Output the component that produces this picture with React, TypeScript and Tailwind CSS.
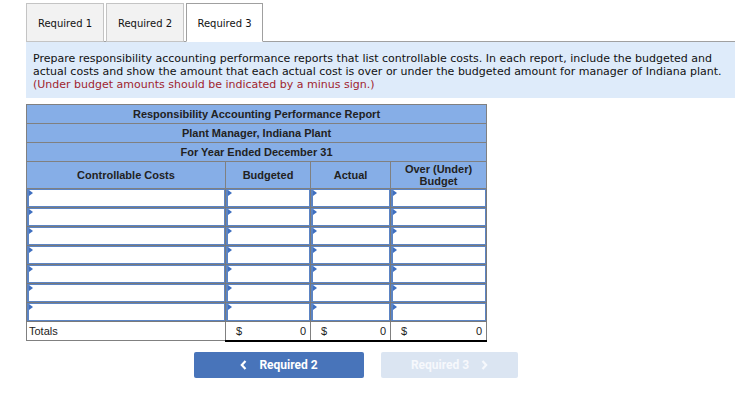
import React from 'react';

const rows = [0, 1, 2, 3, 4, 5, 6];

function InputCell() {
    return (
        <td className="border border-[#7a7a7a] p-0">
            <div className="relative h-[18px] border border-l-2 border-[#5b84c4] bg-white">
                <span className="absolute left-0 top-0 w-0 h-0 border-y-[3px] border-y-transparent border-l-[4px] border-l-[#3f6fc0]" />
            </div>
        </td>
    );
}

export default function App() {
    return (
        <div className="w-[746px] h-[400px] bg-white pl-[26px] pt-[3px] font-['Liberation_Sans',Arial,sans-serif]">
            {/* tabs */}
            <div className="flex items-end gap-[2px] h-[39px] w-[709px] border-b border-[#a0a0a0] font-['DejaVu_Sans',Verdana,sans-serif] text-[10px] text-[#111]">
                <div className="w-[78px] h-[39px] -mb-px flex items-center justify-center pt-px bg-[#f2f2f2] border border-[#c4c4c4]">
                    Required 1
                </div>
                <div className="w-[78px] h-[39px] -mb-px flex items-center justify-center pt-px bg-[#f2f2f2] border border-[#c4c4c4]">
                    Required 2
                </div>
                <div className="w-[77px] h-[39px] -mb-px flex items-center justify-center pt-px bg-white border border-[#a0a0a0] border-b-white">
                    Required 3
                </div>
            </div>

            {/* instructions */}
            <div className="w-[709px] h-[56px] bg-[#deebfa] px-[7px] pt-[10px] font-['DejaVu_Sans',Verdana,sans-serif] text-[11px] leading-[13px] text-[#111]">
                <p>
                    Prepare responsibility accounting performance reports that list controllable costs. In each report, include the budgeted and
                    actual costs and show the amount that each actual cost is over or under the budgeted amount for manager of Indiana plant.
                </p>
                <p className="text-[#a0252f]">(Under budget amounts should be indicated by a minus sign.)</p>
            </div>

            {/* report table */}
            <table className="mt-[6px] w-[461px] border-collapse border border-[#808080] text-[11px] text-[#222] table-fixed">
                <colgroup>
                    <col className="w-[199px]" />
                    <col className="w-[85px]" />
                    <col className="w-[80px]" />
                    <col className="w-[96px]" />
                </colgroup>
                <thead>
                    <tr>
                        <th colSpan={4} className="h-[19px] bg-[#86aee7] border border-[#808080] font-bold p-0">
                            Responsibility Accounting Performance Report
                        </th>
                    </tr>
                    <tr>
                        <th colSpan={4} className="h-[19px] bg-[#86aee7] border border-[#808080] font-bold p-0">
                            Plant Manager, Indiana Plant
                        </th>
                    </tr>
                    <tr>
                        <th colSpan={4} className="h-[19px] bg-[#86aee7] border border-[#808080] font-bold p-0">
                            For Year Ended December 31
                        </th>
                    </tr>
                    <tr>
                        <th className="h-[27px] bg-[#86aee7] border border-[#808080] font-bold p-0">Controllable Costs</th>
                        <th className="bg-[#86aee7] border border-[#808080] font-bold p-0">Budgeted</th>
                        <th className="bg-[#86aee7] border border-[#808080] font-bold p-0">Actual</th>
                        <th className="bg-[#86aee7] border border-[#808080] font-bold p-0 leading-[12px]">
                            Over (Under)
                            <br />
                            Budget
                        </th>
                    </tr>
                </thead>
                <tbody>
                    {rows.map((r) => (
                        <tr key={r}>
                            <InputCell />
                            <InputCell />
                            <InputCell />
                            <InputCell />
                        </tr>
                    ))}
                    <tr>
                        <td className="h-[19px] border border-[#808080] px-[2px] py-0">Totals</td>
                        {[0, 1, 2].map((i) => (
                            <td key={i} className="border border-[#808080] border-t-black border-b-2 border-b-black px-[4px] py-0">
                                <div className="flex justify-between pl-[6px]">
                                    <span>$</span>
                                    <span>0</span>
                                </div>
                            </td>
                        ))}
                    </tr>
                </tbody>
            </table>

            {/* nav buttons */}
            <div className="flex mt-[10px] font-['Roboto',sans-serif] font-bold text-[12px] text-white">
                <button className="ml-[168px] w-[170px] h-[26px] rounded-[2px] bg-[#4874ba] flex items-center justify-center gap-[12px]">
                    <svg width="7" height="10" viewBox="0 0 7 10" fill="none">
                        <path d="M5.5 1 L1.8 5 L5.5 9" stroke="white" strokeWidth="2.2" />
                    </svg>
                    <span>Required 2</span>
                </button>
                <button className="ml-[17px] w-[137px] h-[26px] rounded-[2px] bg-[#dbe5f2] flex items-center justify-center gap-[12px] text-[#f6f8fc]">
                    <span>Required 3</span>
                    <svg width="7" height="10" viewBox="0 0 7 10" fill="none">
                        <path d="M1.5 1 L5.2 5 L1.5 9" stroke="#f6f8fc" strokeWidth="2.2" />
                    </svg>
                </button>
            </div>
        </div>
    );
}
